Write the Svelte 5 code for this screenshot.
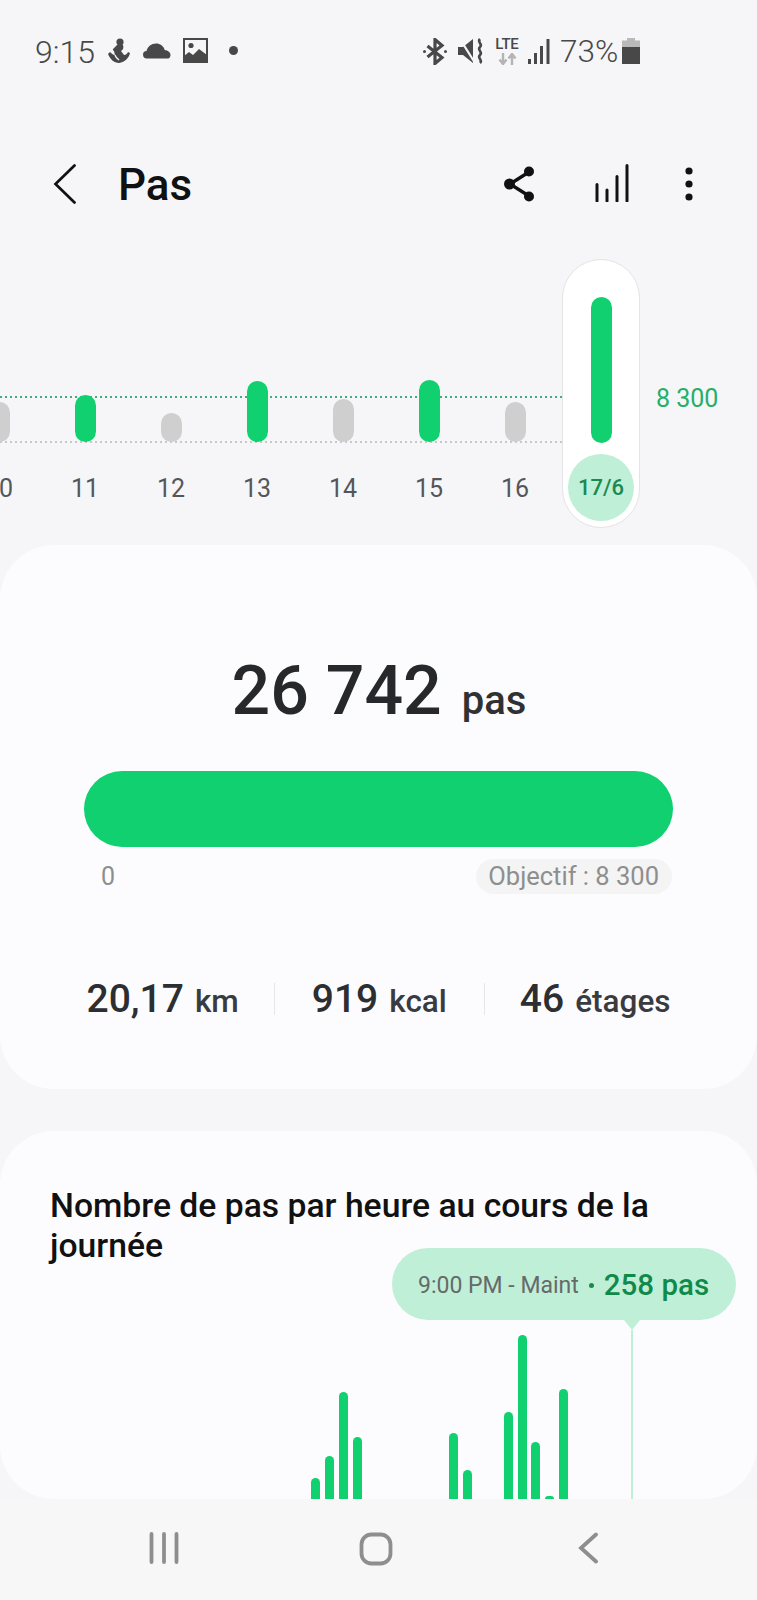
<script>
  const days = [
    { label: '10', h: 40, on: false, edge: true },
    { label: '11', h: 47, on: true },
    { label: '12', h: 29, on: false },
    { label: '13', h: 61, on: true },
    { label: '14', h: 43, on: false },
    { label: '15', h: 62, on: true },
    { label: '16', h: 40, on: false }
  ];
  const hourly = [21, 43, 107, 62, 0, 0, 0, 0, 0, 0, 66, 29, 0, 0, 87, 164, 57, 3, 110, 0, 0, 0, 0];
  const stats = [
    { value: '20,17', unit: 'km' },
    { value: '919', unit: 'kcal' },
    { value: '46', unit: 'étages' }
  ];
</script>

<div class="screen">
  <header class="status">
    <span class="time">9:15</span>
    <svg class="i-person" width="22" height="25" viewBox="0 0 22 25" aria-hidden="true">
      <circle cx="12" cy="4" r="3.600" fill="#484848"/>
      <path d="M9 7h6c1 3 0 5-2 6l3 4c2 0 3-1 4-3l2 1c-1 5-5 9-11 10C6 25 2 21 0 16l2-2c2 2 3 3 5 3l-1-4c-2-1-1-2 0-3z" fill="#484848"/>
      <path d="M7 17c1 3 3 4 4 5" stroke="#f6f6f8" stroke-width="1.400" fill="none"/>
    </svg>
    <svg class="i-cloud" width="28" height="16" viewBox="0 0 28 16" aria-hidden="true">
      <path d="M4 15.500a3.700 3.700 0 0 1-.5-7.400C4.500 3.500 8.500.5 13 .5c4.200 0 7.600 2.700 8.700 6.400 3.300.3 5.800 2.400 5.800 5 0 2-1 3-2 3.600z" fill="#484848"/>
    </svg>
    <svg class="i-image" width="25" height="25" viewBox="0 0 25 25" aria-hidden="true">
      <rect x="1" y="1" width="23" height="23" fill="none" stroke="#484848" stroke-width="2"/>
      <circle cx="8" cy="7.500" r="2.600" fill="#484848"/>
      <path d="M1 24v-6l5-4 4 3 6-6 4 3 4 3v7z" fill="#484848"/>
    </svg>
    <span class="dot"></span>
    <span class="grow"></span>
    <svg class="i-bt" width="24" height="27" viewBox="0 0 24 27" aria-hidden="true">
      <path d="M4.500 8 19 19.500 12 25.500V1.500L19 7.500 4.500 19" fill="none" stroke="#484848" stroke-width="3.200"/>
      <circle cx="1.500" cy="13.500" r="1.500" fill="#484848"/>
      <circle cx="22.500" cy="13.500" r="1.500" fill="#484848"/>
    </svg>
    <svg class="i-mute" width="27" height="26" viewBox="0 0 27 26" aria-hidden="true">
      <path d="M0 9h5L15 1v24L5 17H0z" fill="#484848"/>
      <path d="M2 1l15 24" stroke="#f6f6f8" stroke-width="2.200"/>
      <path d="M22 1c-3.500 3.500 3.500 5 0 8s3.500 5 0 8 3.500 5 0 8" fill="none" stroke="#484848" stroke-width="2.600"/>
    </svg>
    <div class="lte">
      <span>LTE</span>
      <svg width="19" height="12" viewBox="0 0 19 12" aria-hidden="true">
        <path d="M5 0v10M1.500 6.500 5 11l3.500-4.500M14 12V2M10.500 5.500 14 1l3.500 4.500" fill="none" stroke="#b4b4b4" stroke-width="2.400"/>
      </svg>
    </div>
    <svg class="i-signal" width="22" height="25" viewBox="0 0 22 25" aria-hidden="true">
      <g fill="#484848">
        <rect x="0" y="20" width="3" height="5"/>
        <rect x="6" y="14" width="3" height="11"/>
        <rect x="12" y="7" width="3" height="18"/>
        <rect x="18.500" y="0" width="3" height="25"/>
      </g>
    </svg>
    <span class="pct">73%</span>
    <svg class="i-batt" width="18" height="26" viewBox="0 0 18 26" aria-hidden="true">
      <path d="M5 0h8v2.500h5V9H0V2.500h5z" fill="#b9b9b9"/>
      <path d="M0 9h18v17H0z" fill="#484848"/>
    </svg>
  </header>

  <div class="appbar">
    <svg class="back" width="24" height="40" viewBox="0 0 24 40" aria-hidden="true">
      <path d="M21.500 1.500 2.500 20l19 18.500" fill="none" stroke="#111" stroke-width="2.700" stroke-linecap="round"/>
    </svg>
    <span class="title">Pas</span>
    <span class="grow"></span>
    <svg class="share" width="30" height="36" viewBox="0 0 30 36" aria-hidden="true">
      <path d="M25 6 6 18l19 12" fill="none" stroke="#111" stroke-width="3.400"/>
      <circle cx="25" cy="5.500" r="5" fill="#111"/>
      <circle cx="5.500" cy="18" r="5.500" fill="#111"/>
      <circle cx="25" cy="30.500" r="5" fill="#111"/>
    </svg>
    <svg class="bars" width="34" height="38" viewBox="0 0 34 38" aria-hidden="true">
      <path d="M2 37V20.500M12 37V26M22 37V12.500M32 37V1.500" stroke="#111" stroke-width="3" stroke-linecap="round" fill="none"/>
    </svg>
    <svg class="more" width="8" height="34" viewBox="0 0 8 34" aria-hidden="true">
      <circle cx="4" cy="4" r="3.600" fill="#111"/>
      <circle cx="4" cy="17" r="3.600" fill="#111"/>
      <circle cx="4" cy="30" r="3.600" fill="#111"/>
    </svg>
  </div>

  <div class="trend">
    <div class="goal-line"></div>
    <div class="base-line"></div>
    <div class="days">
      {#each days as d}
        <div class="day">
          <div class="stick-slot">
            <div class="stick" class:on={d.on} style="height:{d.h}px"></div>
          </div>
          <span class="daylabel" class:edge={d.edge}>{d.label}</span>
        </div>
      {/each}
    </div>
    <div class="selected">
      <div class="sel-bar"></div>
      <div class="sel-date">17/6</div>
    </div>
    <span class="goal-val">8 300</span>
  </div>

  <section class="card summary">
    <div class="count"><strong>26 742</strong><span>pas</span></div>
    <div class="progress"></div>
    <div class="scale"><span class="zero">0</span><span class="goal">Objectif : 8 300</span></div>
    <div class="stats">
      {#each stats as s}
        <div class="stat"><strong>{s.value}</strong><span>{s.unit}</span></div>
      {/each}
    </div>
  </section>

  <section class="card hourly">
    <h2>Nombre de pas par heure au cours de la journée</h2>
    <div class="tip">
      <span class="tip-time">9:00 PM - Maint</span><span class="tip-dot"></span><span class="tip-val">258 pas</span>
      <span class="tip-arrow"></span>
    </div>
    <div class="chart">
      {#each hourly as h}
        <div class="slot"><div class="hbar" style="height:{h}px"></div></div>
      {/each}
      <div class="slot"><div class="marker"></div></div>
    </div>
  </section>

  <nav class="nav">
    <svg width="30" height="32" viewBox="0 0 30 32" aria-hidden="true">
      <path d="M2.500 2v28M15 2v28M27.500 2v28" stroke="#8e8e8e" stroke-width="3.800" stroke-linecap="round" fill="none"/>
    </svg>
    <svg width="34" height="34" viewBox="0 0 34 34" aria-hidden="true">
      <rect x="2.500" y="2.500" width="29" height="29" rx="10" fill="none" stroke="#8e8e8e" stroke-width="3.800"/>
    </svg>
    <svg width="21" height="32" viewBox="0 0 21 32" aria-hidden="true">
      <path d="M18 2.500 3 16l15 13.500" fill="none" stroke="#8e8e8e" stroke-width="3.800" stroke-linecap="round"/>
    </svg>
  </nav>
</div>

<style>
  :global(body) { margin: 0; background: #f6f6f8; }
  svg { display: block; flex: none; }
  .grow { flex: 1; }
  .screen {
    width: 757px;
    height: 1600px;
    background: #f6f6f8;
    overflow: hidden;
    font-family: Roboto, "Liberation Sans", sans-serif;
    display: flex;
    flex-direction: column;
  }

  .status {
    height: 102px;
    box-sizing: border-box;
    padding: 38px 117px 0 35px;
    display: flex;
    align-items: flex-start;
    color: #484848;
  }
  .time { font-size: 32px; line-height: 26px; font-weight: 300; width: 73px; flex: none; margin-top: 1px; }
  .i-cloud { margin: 5px 0 0 13px; }
  .i-image { margin-left: 12px; }
  .dot { width: 9px; height: 9px; border-radius: 50%; background: #484848; margin: 8px 0 0 21px; }
  .i-mute { margin: 0 0 0 11px; }
  .lte { margin-left: 9px; width: 26px; display: flex; flex-direction: column; align-items: center; gap: 2px; }
  .lte span { font-size: 15px; line-height: 13px; font-weight: 500; letter-spacing: -0.2px; }
  .i-signal { margin: 1px 0 0 8px; }
  .pct { font-size: 31.500px; line-height: 26px; font-weight: 300; margin: 1px 0 0 10px; width: 60px; flex: none; }
  .i-batt { margin-left: 2px; }

  .appbar {
    height: 157px;
    box-sizing: border-box;
    padding: 62px 64px 0 53px;
    display: flex;
    align-items: flex-start;
  }
  .title { font-size: 44px; line-height: 44px; font-weight: 500; color: #111; margin: -1px 0 0 41px; }
  .share { margin-top: 2px; }
  .bars { margin: 0 0 0 61px; }
  .more { margin: 3px 0 0 56px; }

  .trend { position: relative; height: 286px; display: flex; align-items: flex-start; flex: none; }
  .goal-line, .base-line {
    position: absolute;
    left: 0;
    width: 562px;
    height: 2px;
    background-size: 5px 2px;
    background-repeat: repeat-x;
  }
  .goal-line { top: 137px; background-image: linear-gradient(to right, #3fae7e 2px, transparent 2px); }
  .base-line { top: 182px; background-image: linear-gradient(to right, #c8c8c8 2px, transparent 2px); }
  .days { display: flex; margin-left: -44px; flex: none; position: relative; }
  .day { width: 86px; display: flex; flex-direction: column; align-items: center; }
  .stick-slot { height: 183px; display: flex; align-items: flex-end; }
  .stick { width: 21px; border-radius: 11px; background: #cfcfcf; }
  .stick.on { background: #10d06f; }
  .daylabel { font-size: 25px; line-height: 30px; margin-top: 32px; color: #555659; }
  .selected {
    position: relative;
    margin-left: 4px;
    width: 78px;
    height: 269px;
    box-sizing: border-box;
    background: #fff;
    border: 1.500px solid #e4e4e6;
    border-radius: 39px;
    display: flex;
    flex-direction: column;
    align-items: center;
    padding-top: 37px;
    flex: none;
  }
  .sel-bar { width: 21px; height: 146px; border-radius: 11px; background: #10d06f; }
  .sel-date {
    width: 66px;
    height: 67px;
    margin-top: 11px;
    border-radius: 50%;
    background: #c0efd8;
    color: #1c8a50;
    font-size: 22px;
    font-weight: 500;
    display: flex;
    align-items: center;
    justify-content: center;
  }
  .goal-val { font-size: 25px; line-height: 30px; color: #22b06b; margin: 125px 0 0 16px; flex: none; }

  .card { background: #fcfcfe; border-radius: 54px; flex: none; }
  .summary { height: 544px; box-sizing: border-box; padding: 108px 84px 0 84px; display: flex; flex-direction: column; }
  .count { display: flex; align-items: baseline; justify-content: center; gap: 20px; color: #27282b; padding-left: 1px; }
  .count strong { font-size: 68px; line-height: 76px; font-weight: 500; }
  .count span { font-size: 40px; font-weight: 500; color: #303134; }
  .progress { height: 76px; border-radius: 38px; background: #10d06f; margin-top: 42px; }
  .scale { display: flex; justify-content: space-between; align-items: center; margin-top: 12px; }
  .zero { font-size: 25px; color: #8e8e8e; margin-left: 17px; }
  .goal { font-size: 25.500px; line-height: 35px; color: #8e8e8e; background: #f4f4f4; border-radius: 18px; padding: 0 13px 0 12px; margin-right: 1px; }
  .stats { display: flex; justify-content: center; margin: 89px -84px 0 -84px; }
  .stat { display: flex; align-items: baseline; gap: 11px; padding: 0 37px; height: 32px; line-height: 32px; color: #2d2e31; }
  .stat:first-child { padding: 0 35px 0 38px; }
  .stat:last-child { padding: 0 38px 0 35px; }
  .stat + .stat { border-left: 1px solid #e6e6e8; }
  .stat strong { font-size: 39px; font-weight: 500; }
  .stat span { font-size: 31.500px; font-weight: 500; color: #3a3b3e; }

  .hourly {
    position: relative;
    margin-top: 42px;
    height: 368px;
    box-sizing: border-box;
    padding: 55px 60px 0 50px;
    overflow: hidden;
    display: flex;
    flex-direction: column;
  }
  h2 { margin: 0; font-size: 33.700px; line-height: 40px; font-weight: 500; color: #111; }
  .tip {
    position: absolute;
    left: 392px;
    top: 117px;
    width: 344px;
    height: 72px;
    box-sizing: border-box;
    padding: 2px 0 0 26px;
    border-radius: 36px;
    background: #c0efd8;
    display: flex;
    align-items: center;
  }
  .tip-time { font-size: 23px; color: #666a68; }
  .tip-dot { width: 5px; height: 5px; border-radius: 50%; background: #1c8a50; margin: 0 10px; }
  .tip-val { font-size: 29.500px; font-weight: 500; color: #108a4a; }
  .tip-arrow {
    position: absolute;
    left: 232px;
    top: 72px;
    width: 0;
    height: 0;
    border-left: 8px solid transparent;
    border-right: 8px solid transparent;
    border-top: 10px solid #c0efd8;
  }
  .chart {
    position: absolute;
    left: 309px;
    bottom: 0;
    height: 200px;
    display: flex;
    align-items: flex-end;
  }
  .slot { width: 13.750px; display: flex; justify-content: center; flex: none; }
  .hbar { width: 9px; border-radius: 5px 5px 0 0; background: #10d06f; }
  .marker { width: 2px; height: 169px; background: #c0efd8; flex: none; }

  .nav {
    flex: 1;
    background: #f7f7f7;
    display: flex;
    align-items: flex-start;
    padding-top: 33px;
    box-sizing: border-box;
  }
  .nav svg:nth-child(1) { margin-left: 149px; }
  .nav svg:nth-child(2) { margin-left: 180px; }
  .nav svg:nth-child(3) { margin-left: 185px; }
</style>
